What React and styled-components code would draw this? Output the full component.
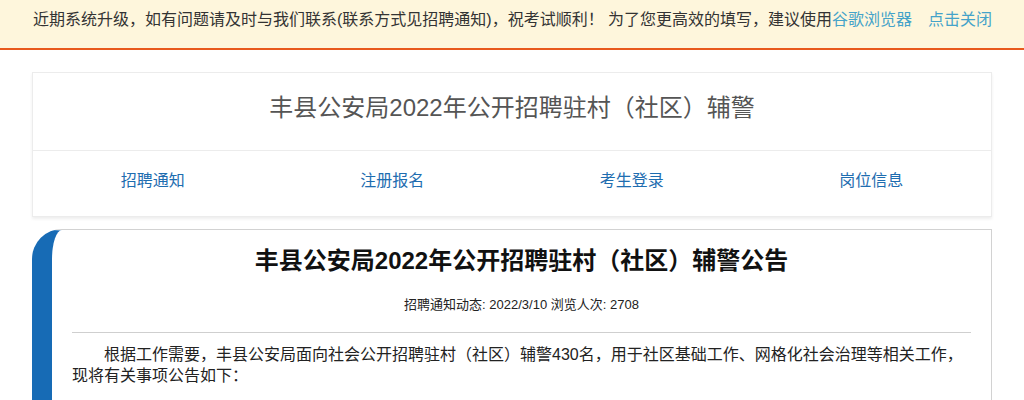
import React from "react";
import styled, { createGlobalStyle } from "styled-components";

const Global = createGlobalStyle`
  html, body { margin: 0; padding: 0; background: #fff; }
  body {
    font-family: "Liberation Sans", "Noto Sans CJK SC", sans-serif;
    color: #333;
  }
  * { box-sizing: border-box; }
`;

const Notice = styled.div`
  background: #fef6dc;
  border-bottom: 2px solid #e8591c;
  padding: 10px 0 18px;
`;

const NoticeInner = styled.div`
  width: 960px;
  margin: 0 auto;
  display: flex;
  justify-content: space-between;
  align-items: center;
  padding-left: 1px;
  font-size: 16px;
  line-height: 20px;
  color: #333;
  white-space: nowrap;
`;

const Link = styled.a`
  color: #45a3c9;
  text-decoration: none;
  cursor: pointer;
`;

const HeaderCard = styled.div`
  width: 960px;
  margin: 22px auto 0;
  background: #fff;
  border: 1px solid #ececec;
  box-shadow: 0 2px 3px rgba(0, 0, 0, 0.07);
`;

const SiteTitle = styled.div`
  padding: 18px 0 25px;
  line-height: 34px;
  font-size: 24px;
  color: #555;
  text-align: center;
  border-bottom: 1px solid #ececec;
`;

const Nav = styled.nav`
  display: grid;
  grid-template-columns: repeat(4, 1fr);
  padding: 19px 0 24px;
`;

const NavItem = styled.a`
  text-align: center;
  font-size: 16px;
  line-height: 22px;
  color: #1e6db0;
  text-decoration: none;
`;

const Article = styled.div`
  width: 960px;
  margin: 12px auto 0;
  background: #fff;
  border: 1px solid #d2d2d2;
  border-left: 20px solid #176bb5;
  border-top-left-radius: 30px;
  padding: 0 20px 40px;
`;

const ArticleTitle = styled.h1`
  margin: 0;
  padding-top: 14px;
  font-size: 24px;
  line-height: 34px;
  font-weight: bold;
  color: #111;
  text-align: center;
`;

const Meta = styled.div`
  margin-top: 17px;
  font-size: 13px;
  line-height: 20px;
  color: #222;
  text-align: center;
`;

const Rule = styled.hr`
  margin: 17px 0 0;
  border: 0;
  border-top: 1px solid #cfcfcf;
  height: 0;
`;

const Para = styled.p`
  margin: 11px 0 0;
  font-size: 16px;
  line-height: 21px;
  text-indent: 2em;
  color: #222;
`;

const navs = ["招聘通知", "注册报名", "考生登录", "岗位信息"];

export default function App() {
  return (
    <>
      <Global />
      <Notice>
        <NoticeInner>
          <span>
            近期系统升级，如有问题请及时与我们联系(联系方式见招聘通知)，祝考试顺利！ 为了您更高效的填写，建议使用
            <Link>谷歌浏览器</Link>
          </span>
          <Link>点击关闭</Link>
        </NoticeInner>
      </Notice>
      <HeaderCard>
        <SiteTitle>丰县公安局2022年公开招聘驻村（社区）辅警</SiteTitle>
        <Nav>
          {navs.map((n) => (
            <NavItem key={n}>{n}</NavItem>
          ))}
        </Nav>
      </HeaderCard>
      <Article>
        <ArticleTitle>丰县公安局2022年公开招聘驻村（社区）辅警公告</ArticleTitle>
        <Meta>招聘通知动态: 2022/3/10 浏览人次: 2708</Meta>
        <Rule />
        <Para>
          根据工作需要，丰县公安局面向社会公开招聘驻村（社区）辅警430名，用于社区基础工作、网格化社会治理等相关工作，现将有关事项公告如下：
        </Para>
      </Article>
    </>
  );
}
